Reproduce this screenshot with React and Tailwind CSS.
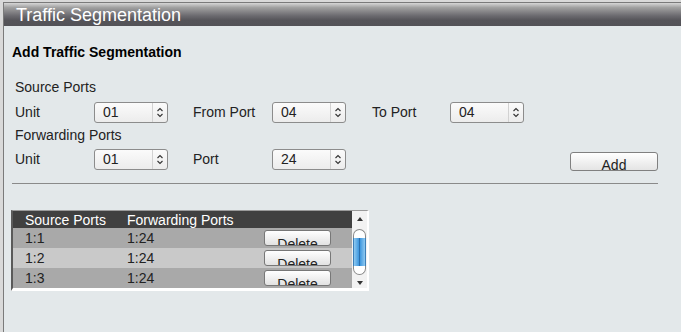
import React from "react";

const font = { fontFamily: '"Liberation Sans", Arial, sans-serif' };

function Chevrons() {
  return (
    <svg width="8" height="11" viewBox="0 0 8 11" className="block">
      <path d="M1.5 4 L4 1.5 L6.5 4" fill="none" stroke="#333" strokeWidth="1.1" />
      <path d="M1.5 7 L4 9.5 L6.5 7" fill="none" stroke="#333" strokeWidth="1.1" />
    </svg>
  );
}

function Select({ value }) {
  return (
    <div className="flex h-[21px] w-[74px] items-center rounded-[3px] border border-[#8c8c8c] bg-gradient-to-b from-[#fbfbfb] to-[#ececec]">
      <span className="flex-1 pl-[8px] text-[14px] leading-none text-[#222]">{value}</span>
      <span className="flex h-full w-[15px] items-center justify-center border-l border-[#d2d2d2]">
        <Chevrons />
      </span>
    </div>
  );
}

function Label({ children, w = "w-[79px]" }) {
  return <span className={`${w} text-[14px] leading-none text-[#222]`}>{children}</span>;
}

function DeleteButton() {
  return (
    <div className="h-[16px] w-[67px] overflow-hidden rounded-[3px] border border-[#777] bg-gradient-to-b from-white to-[#e2e2e2] pt-[6px] text-center text-[14px] leading-none text-[#222]">
      Delete
    </div>
  );
}

const rows = [
  { src: "1:1", fwd: "1:24", bg: "bg-[#a9a9a9]" },
  { src: "1:2", fwd: "1:24", bg: "bg-[#c9c9c9]" },
  { src: "1:3", fwd: "1:24", bg: "bg-[#a9a9a9]" },
];

export default function App() {
  return (
    <div className="h-[332px] w-[681px] overflow-hidden bg-[#d9d9d9] pl-[3px] pt-[2px]" style={font}>
      <div className="h-full border-l border-t border-[#7a7a7a] bg-[#e3e8ea]">
        <div className="flex h-[23px] items-center bg-[linear-gradient(#d6d6d6,#a0a0a0_20%,#6c6b70_55%,#555459_75%,#535257)] pl-[12px]">
          <span className="text-[18px] leading-none text-white">Traffic Segmentation</span>
        </div>

        <div className="mt-[16px] flex h-[20px] items-center pl-[8px]">
          <span className="text-[14px] font-bold leading-none text-black">Add Traffic Segmentation</span>
        </div>

        <div className="pl-[11px]">
          <div className="mt-[15px] flex h-[20px] items-center">
            <Label w="">Source Ports</Label>
          </div>
          <div className="mt-[4px] flex h-[22px] items-center">
            <Label>Unit</Label>
            <Select value="01" />
            <span className="w-[25px]" />
            <Label>From Port</Label>
            <Select value="04" />
            <span className="w-[26px]" />
            <Label w="w-[78px]">To Port</Label>
            <Select value="04" />
          </div>
          <div className="mt-[2px] flex h-[20px] items-center">
            <Label w="">Forwarding Ports</Label>
          </div>
          <div className="mt-[3px] flex h-[22px] items-center">
            <Label>Unit</Label>
            <Select value="01" />
            <span className="w-[25px]" />
            <Label>Port</Label>
            <Select value="24" />
            <div className="ml-[224px] mt-[4px] h-[19px] w-[88px] overflow-hidden rounded-[3px] border border-[#808080] bg-gradient-to-b from-white to-[#e4e4e4] pt-[5px] text-center text-[14px] leading-none text-[#222]">
              Add
            </div>
          </div>
        </div>

        <div className="ml-[8px] mt-[13px] h-px w-[646px] bg-[#8a8a8a]" />

        <div className="ml-[7px] mt-[26px] w-[358px] border-l-2 border-t border-b-[3px] border-r-[2px] border-l-[#5a5a5a] border-t-[#9a9a9a] border-b-white border-r-white">
          <div className="flex">
            <div className="w-[341px]">
              <div className="flex h-[17px] items-center bg-[#404040] text-[14px] leading-none text-white">
                <span className="w-[114px] pl-[12px]">Source Ports</span>
                <span>Forwarding Ports</span>
              </div>
              {rows.map((r) => (
                <div key={r.src} className={`flex h-[20px] items-center ${r.bg} text-[14px] leading-none text-[#222]`}>
                  <span className="w-[114px] pl-[12px]">{r.src}</span>
                  <span className="w-[137px]">{r.fwd}</span>
                  <DeleteButton />
                </div>
              ))}
            </div>
            <div className="flex w-[15px] flex-col items-center bg-[#f2f2f2]">
              <svg width="8" height="6" viewBox="0 0 8 6" className="mt-[5px]">
                <path d="M4 1 L7 5 L1 5 Z" fill="#333" />
              </svg>
              <div className="mt-[7px] flex w-[13px] flex-col">
                <div className="h-[9px] rounded-t-[7px] border border-b-0 border-[#888] bg-white" />
                <div className="flex h-[28px] border-x border-[#3d7fb8]">
                  <div className="flex-1 bg-gradient-to-r from-[#8ec9f0] to-[#3c97de]" />
                  <div className="w-px bg-[#2a6fae]" />
                  <div className="flex-1 bg-gradient-to-r from-[#3c97de] to-[#8ec9f0]" />
                </div>
                <div className="h-[9px] rounded-b-[7px] border border-t-0 border-[#888] bg-white" />
              </div>
              <svg width="8" height="6" viewBox="0 0 8 6" className="mt-[5px]">
                <path d="M1 1 L7 1 L4 5 Z" fill="#333" />
              </svg>
            </div>
          </div>
        </div>
      </div>
    </div>
  );
}
